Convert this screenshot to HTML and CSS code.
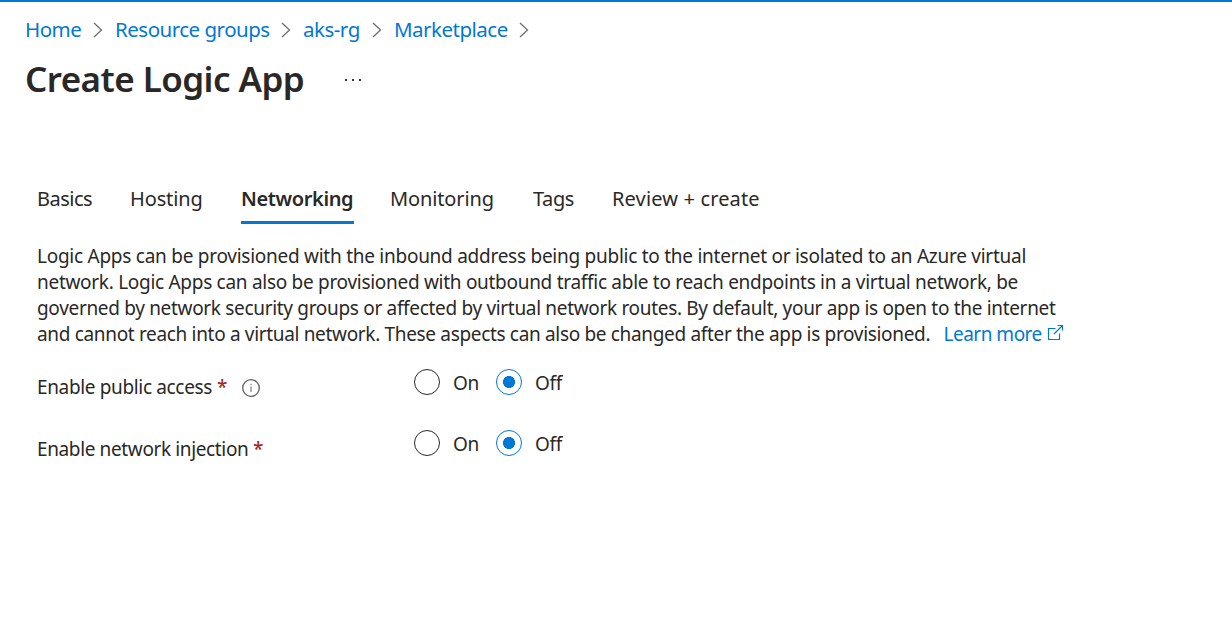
FILE: index.html
```
<!DOCTYPE html>
<html lang="en">
<head>
<meta charset="utf-8">
<title>Create Logic App</title>
<link rel="stylesheet" href="styles.css">
</head>
<body>
<nav class="breadcrumb">
<a class="crumb crumb-home">Home</a>
<svg class="chevron" viewBox="0 0 10 16"><path d="M1 1l7.500 7L1 15"/></svg>
<a class="crumb crumb-groups">Resource groups</a>
<svg class="chevron" viewBox="0 0 10 16"><path d="M1 1l7.500 7L1 15"/></svg>
<a class="crumb crumb-rg">aks-rg</a>
<svg class="chevron" viewBox="0 0 10 16"><path d="M1 1l7.500 7L1 15"/></svg>
<a class="crumb crumb-market">Marketplace</a>
<svg class="chevron" viewBox="0 0 10 16"><path d="M1 1l7.500 7L1 15"/></svg>
</nav>
<header class="heading">
<h1 class="title">Create Logic App</h1>
<svg class="more" viewBox="0 0 18 4"><path d="M1 1h2v2H1zM8 1h2v2H8zM15 1h2v2h-2z"/></svg>
</header>
<nav class="tabs">
<a class="tab tab-basics">Basics</a>
<a class="tab tab-hosting">Hosting</a>
<a class="tab tab-networking active">Networking</a>
<a class="tab tab-monitoring">Monitoring</a>
<a class="tab tab-tags">Tags</a>
<a class="tab tab-review">Review + create</a>
</nav>
<main class="content">
<p class="description">
<span class="line line-1">Logic Apps can be provisioned with the inbound address being public to the internet or isolated to an Azure virtual</span>
<span class="line line-2">network. Logic Apps can also be provisioned with outbound traffic able to reach endpoints in a virtual network, be</span>
<span class="line line-3">governed by network security groups or affected by virtual network routes. By default, your app is open to the internet</span>
<span class="line line-4"><span class="last">and cannot reach into a virtual network. These aspects can also be changed after the app is provisioned.</span><a class="learn">Learn more</a><svg class="external" viewBox="0 0 17 17"><path d="M8.500 4.500H1.500v11h11V9.500M10.500 1.500h5v5M15.500 1.500L7 10"/></svg></span>
</p>
<div class="field">
<div class="label"><span class="label-access">Enable public access</span><span class="required">*</span><svg class="info" viewBox="0 0 18 18"><circle cx="9" cy="9" r="8.300"/><path class="info-mark" d="M9 7.500v5.500M9 4.700v1.500"/></svg></div>
<div class="radios"><i class="radio"></i><span class="option">On</span><i class="radio checked"></i><span class="option">Off</span></div>
</div>
<div class="field field-injection">
<div class="label"><span class="label-injection">Enable network injection</span><span class="required">*</span></div>
<div class="radios"><i class="radio"></i><span class="option">On</span><i class="radio checked"></i><span class="option">Off</span></div>
</div>
</main>
</body>
</html>
```

FILE: styles.css
```
* { box-sizing: border-box; }
body {
  margin: 0;
  height: 624px;
  overflow: hidden;
  background: #fff;
  border-top: 2px solid #0078d4;
  color: #292827;
  font-family: "Noto Sans", "Open Sans", sans-serif;
  font-size: 19px;
  line-height: 26px;
  white-space: nowrap;
}
a { text-decoration: none; color: #0078d4; }
svg { display: block; flex: none; fill: none; }
.breadcrumb { display: flex; align-items: center; height: 55px; padding-left: 25px; }
.crumb { flex: none; height: 28px; font-size: 20.5px; letter-spacing: -0.5px; }
.crumb-home { width: 68px; }
.crumb-groups { width: 166px; }
.crumb-rg { width: 69px; }
.crumb-market { width: 125px; }
.chevron { width: 10px; height: 16px; margin-right: 12px; stroke: #706f6e; stroke-width: 1.300; }
.heading { display: flex; align-items: center; height: 44px; padding-left: 25px; }
.title { margin: 0; width: 319px; font-size: 35px; font-weight: 600; line-height: 44px; letter-spacing: -0.56px; }
.more { width: 18px; height: 4px; margin-top: 2px; fill: #333; }
.tabs { display: flex; height: 56px; margin-top: 67px; padding-left: 37px; }
.tab { flex: none; height: 56px; padding-top: 18px; color: #292827; font-size: 20px; letter-spacing: -0.13px; }
.tab-basics { width: 93px; letter-spacing: -0.5px; }
.tab-hosting { width: 111px; }
.tab-networking { width: 113px; margin-right: 36px; border-bottom: 3px solid #0078d4; font-weight: 600; letter-spacing: -0.38px; }
.tab-monitoring { width: 143px; }
.tab-tags { width: 79px; letter-spacing: -0.4px; }
.tab-review { letter-spacing: 0.15px; }
.content { padding: 19px 0 0 37px; }
.description { margin: 0; }
.line { display: block; height: 26px; }
.line-1 { letter-spacing: -0.26px; }
.line-2 { letter-spacing: -0.29px; }
.line-3 { letter-spacing: -0.32px; }
.line-4 { display: flex; letter-spacing: -0.33px; }
.last { width: 906.5px; }
.learn { width: 103px; letter-spacing: -0.5px; }
.external { width: 17px; height: 17px; margin-top: 3px; stroke: #0078d4; stroke-width: 1.200; }
.field { display: flex; margin-top: 22px; }
.field-injection { margin-top: 30px; }
.label { display: flex; width: 377px; padding-top: 5px; }
.field-injection .label { padding-top: 6px; }
.label-access { width: 180px; letter-spacing: -0.35px; }
.label-injection { width: 216px; letter-spacing: -0.37px; }
.required { width: 25px; color: #a4262c; font-weight: 500; }
.info { width: 18px; height: 18px; margin-top: 5px; stroke: #605e5c; stroke-width: 1.300; }
.info-mark { stroke: #8a8886; }
.radios { display: flex; }
.radio { width: 26px; height: 26px; margin-right: 13px; border: 1.500px solid #292827; border-radius: 50%; }
.checked { border-color: #0078d4; background: radial-gradient(circle, #0078d4 5.700px, transparent 6.300px); }
.option { width: 43px; padding-top: 1px; letter-spacing: -0.3px; }
```
